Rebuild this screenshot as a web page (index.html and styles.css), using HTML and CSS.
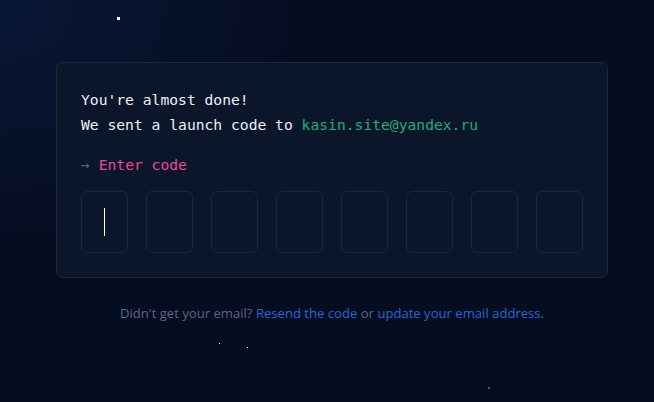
FILE: index.html
```html
<!DOCTYPE html>
<html lang="en">
<head>
<meta charset="utf-8">
<title>Enter code</title>
<link rel="stylesheet" href="styles.css">
</head>
<body>
<div class="sky">
  <span class="star star-a"></span>
  <span class="star star-b"></span>
  <span class="star star-c"></span>
  <span class="star star-d"></span>
</div>
<main class="wrap">
  <section class="card">
    <p class="line">You're almost done!</p>
    <p class="line">We sent a launch code to <span class="email">kasin.site@yandex.ru</span></p>
    <p class="prompt"><span class="arrow">→</span> <span class="label">Enter code</span></p>
    <div class="boxes">
      <div class="box active"><span class="cursor"></span></div>
      <div class="box"></div>
      <div class="box"></div>
      <div class="box"></div>
      <div class="box"></div>
      <div class="box"></div>
      <div class="box"></div>
      <div class="box"></div>
    </div>
  </section>
  <p class="help">Didn't get your email? <a href="#" class="link">Resend the code</a> or <a href="#" class="link">update your email address</a>.</p>
</main>
</body>
</html>
```

FILE: styles.css
```css
html, body {
  margin: 0;
  height: 100%;
}
body {
  background:
    radial-gradient(ellipse 300px 240px at 0 0, rgba(14, 36, 84, 0.45), rgba(14, 36, 84, 0) 100%),
    #050d21;
  overflow: hidden;
  position: relative;
}
.sky {
  position: absolute;
  inset: 0;
  pointer-events: none;
}
.star {
  position: absolute;
  background: #ffffff;
}
.star-a { left: 117px; top: 17px; width: 3px; height: 3px; }
.star-b { left: 219px; top: 343px; width: 1px; height: 1px; }
.star-c { left: 247px; top: 347px; width: 1px; height: 1px; }
.star-d { left: 488px; top: 387px; width: 2px; height: 2px; background: #4a5670; }

.wrap {
  position: relative;
  width: 552px;
  margin-left: 56px;
  padding-top: 62px;
}
.card {
  box-sizing: border-box;
  border: 1px solid #1c2638;
  border-radius: 6px;
  background: #0b162b;
  padding: 24px 24px 24px 24px;
  font-family: "DejaVu Sans Mono", "Liberation Mono", monospace;
  font-size: 14.67px;
  color: #eef1f5;
}
.line {
  margin: 0;
  line-height: 25px;
}
.email {
  color: #16b27a;
}
.prompt {
  margin: 15px 0 0;
  line-height: 25px;
}
.arrow {
  color: #5f6b82;
}
.label {
  color: #ec4899;
}
.boxes {
  display: flex;
  gap: 18px;
  margin-top: 14px;
}
.box {
  box-sizing: border-box;
  width: 47px;
  height: 62px;
  border: 1px solid #1c2638;
  border-radius: 6px;
  display: flex;
  align-items: center;
  justify-content: center;
}
.cursor {
  display: block;
  width: 1px;
  height: 28px;
  background: #ffffff;
}
.help {
  margin: 26px 0 0;
  text-align: center;
  font-family: "Open Sans", "Noto Sans", sans-serif;
  font-size: 13.1px;
  line-height: 18px;
  color: #5a6882;
}
.link {
  color: #2468d6;
  text-decoration: none;
}
```
